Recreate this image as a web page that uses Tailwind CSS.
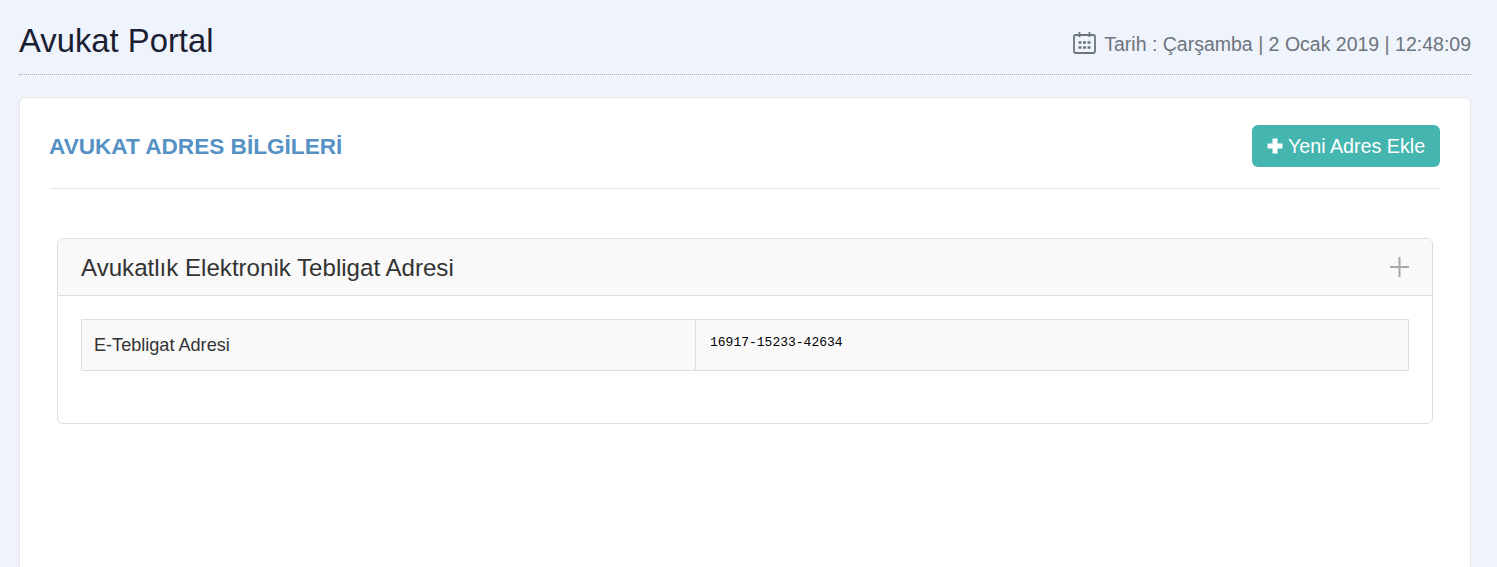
<!DOCTYPE html>
<html lang="tr">
<head>
    <meta charset="UTF-8">
    <meta name="viewport" content="width=device-width, initial-scale=1.0">
    <title>Avukat Portal</title>
    <script src="https://cdn.jsdelivr.net/npm/@tailwindcss/browser@4"></script>
</head>
<body class="h-[567px] overflow-hidden bg-[#eff3fb] font-['Liberation_Sans',Arial,sans-serif] text-[#212529]">
    <div class="px-[19px] pr-[26px]">
        <header class="flex h-[75px] justify-between border-b border-dotted border-[#a9a9b5]">
            <h1 class="mt-[20px] text-[32.8px] leading-[42px] text-[#1a1e33]">Avukat Portal</h1>
            <div class="mt-[31px] flex h-[26px] items-center gap-[8px] text-[19.5px] leading-[26px] text-[#6c757d]">
                <svg class="mb-[2px] h-[22px] w-[23px]" viewBox="0 0 23 22" fill="none" stroke="#6c757d" stroke-width="1.800">
                    <rect x="1" y="3" width="21" height="18" rx="1.500"/>
                    <path d="M6.500 0v5M16.500 0v5"/>
                    <path stroke-width="2.400" d="M5.500 10.500h3M10 10.500h3M14.500 10.500h3M5.500 15.500h3M10 15.500h3M14.500 15.500h3"/>
                </svg>
                <span>Tarih : Çarşamba | 2 Ocak 2019 | 12:48:09</span>
            </div>
        </header>

        <main class="mt-[22px] h-[470px] rounded-t-[6px] border border-b-0 border-[#e6e6e6] bg-white px-[30px]">
            <div class="flex h-[91px] items-start justify-between border-b border-[#e6e6e6] pt-[27px]">
                <h2 class="mt-[7px] -ml-px text-[22.6px] leading-[30px] font-bold text-[#5591c4]">AVUKAT ADRES BİLGİLERİ</h2>
                <button class="flex h-[42px] w-[188px] items-center justify-center gap-[5px] rounded-[6px] bg-[#45b6af] pt-px text-[19.700px] text-white">
                    <svg class="mb-px h-[16px] w-[16px]" viewBox="0 0 16 16" fill="#fff">
                        <path d="M5.500 0.500h5V5.500h5v5h-5v5h-5v-5h-5v-5h5z"/>
                    </svg>
                    <span>Yeni Adres Ekle</span>
                </button>
            </div>

            <section class="mx-[7px] mt-[49px] h-[186px] rounded-[6px] border border-[#dedede]">
                <div class="flex h-[57px] items-center justify-between rounded-t-[6px] border-b border-[#dedede] bg-[#f9f9f9] pr-[23px] pl-[23px]">
                    <h3 class="mt-[2px] text-[24.100px] leading-[30px] text-[#333333]">Avukatlık Elektronik Tebligat Adresi</h3>
                    <svg class="h-[20px] w-[19px]" viewBox="0 0 19 20" stroke="#a8a8a8" stroke-width="2" fill="none">
                        <path d="M0 10h19M9.500 0v20"/>
                    </svg>
                </div>
                <div class="px-[23px] pt-[23px]">
                    <div class="grid h-[52px] grid-cols-[614px_1fr] border border-[#dedede] bg-[#f9f9f9]">
                        <div class="border-r border-[#dedede] pt-[14px] pl-[12px] text-[18.100px] leading-[22px] text-[#333333]">E-Tebligat Adresi</div>
                        <div class="pt-[15px] pl-[14px] font-['Liberation_Mono',monospace] text-[13px] leading-[15px] text-black">16917-15233-42634</div>
                    </div>
                </div>
            </section>
        </main>
    </div>
</body>
</html>
